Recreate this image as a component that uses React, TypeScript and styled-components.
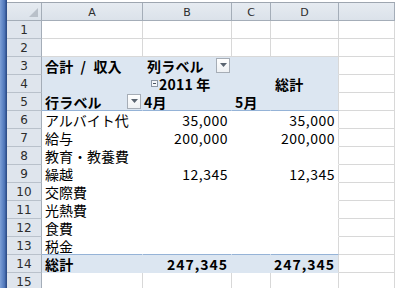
import React from "react";
import styled, { createGlobalStyle, css } from "styled-components";

const Global = createGlobalStyle`
  html, body { margin: 0; padding: 0; background: #ffffff; }
  body { width: 395px; height: 288px; overflow: hidden; }
`;

const Window = styled.div`
  display: flex;
  width: 395px;
  height: 288px;
  overflow: hidden;
  background: #fff;
`;

const FrameStrip = styled.div`
  width: 7px;
  flex: none;
  background: linear-gradient(to right, #7d9fd6 0px, #5d84c4 3px, #4a70b3 5px, #2f4f8a 6px);
`;

const SheetArea = styled.div`
  flex: 1;
  display: flex;
  flex-direction: column;
`;

const TopEdge = styled.div`
  height: 3px;
  flex: none;
  background: #ffffff;
  border-bottom: 1px solid #9ea6b0;
  box-sizing: border-box;
`;

const Grid = styled.div`
  display: grid;
  grid-template-columns: 35px 101px 89px 39px 68px 1fr;
  grid-auto-rows: 18px;
  font-family: "Noto Sans CJK JP", "Noto Sans", sans-serif;
  font-size: 14px;
  color: #000;
`;

const ColHeader = styled.div`
  box-sizing: border-box;
  background: linear-gradient(#e6ebf1, #dbe2ea);
  border-right: 1px solid #a4adb8;
  border-bottom: 1px solid #a4adb8;
  display: flex;
  align-items: center;
  justify-content: center;
  font-family: "DejaVu Sans", sans-serif;
  font-size: 11px;
  color: #2c2c2c;
  padding-top: 1px;
`;

const Corner = styled(ColHeader)`
  justify-content: flex-end;
  align-items: flex-end;
  padding: 0 3px 3px 0;
`;

const RowHeader = styled.div`
  box-sizing: border-box;
  background: #dfe5ed;
  border-right: 1px solid #a4adb8;
  border-bottom: 1px solid #b9c1cb;
  display: flex;
  align-items: center;
  justify-content: center;
  font-family: "DejaVu Sans", sans-serif;
  font-size: 12px;
  color: #2c2c2c;
  padding-top: 1px;
`;

type Tone = "plain" | "pivot" | "body";
type Line = "grid" | "none" | "blue";

const lineColor = (l: Line, bg: string) =>
  l === "grid" ? "#d8d8d8" : l === "blue" ? "#95b3d7" : bg;

const Cell = styled.div<{
  $tone: Tone;
  $bottom: Line;
  $right: Line;
  $bold?: boolean;
  $align?: "left" | "right";
  $pad?: number;
}>`
  box-sizing: border-box;
  ${({ $tone, $bottom, $right }) => {
    const bg = $tone === "pivot" ? "#dce6f1" : "#ffffff";
    return css`
      background: ${bg};
      border-bottom: 1px solid ${lineColor($bottom, bg)};
      border-right: 1px solid ${lineColor($right, bg)};
    `;
  }}
  display: flex;
  align-items: flex-end;
  justify-content: ${({ $align }) => ($align === "right" ? "flex-end" : "flex-start")};
  padding: ${({ $pad = 3, $align }) =>
    $align === "right" ? `0 3px 0 0` : `0 0 0 ${$pad}px`};
  font-weight: ${({ $bold }) => ($bold ? 700 : 400)};
  line-height: 17px;
  white-space: nowrap;
  overflow: visible;
  letter-spacing: ${({ $bold, $align }) =>
    $align === "right" ? ($bold ? "1px" : "0.5px") : $bold ? "0.2px" : "0"};
`;

const Label = styled.span`
  line-height: 16px;
`;

const DropButton = styled.span`
  box-sizing: border-box;
  width: 14px;
  height: 15px;
  margin-left: auto;
  margin-right: 1px;
  margin-bottom: 1px;
  border: 1px solid #a6adb6;
  background: linear-gradient(#ffffff, #eef1f4);
  display: flex;
  align-items: center;
  justify-content: center;
  align-self: center;
`;

const Collapse = styled.span`
  box-sizing: border-box;
  width: 7px;
  height: 7px;
  border: 1px solid #8c96a3;
  background: #f4f6f8;
  display: inline-flex;
  align-items: center;
  justify-content: center;
  margin: 0 1px 5px 5px;
  &::after {
    content: "";
    width: 3px;
    height: 1px;
    background: #4a5563;
  }
`;

const Arrow = () => (
  <svg width="7" height="4" viewBox="0 0 7 4">
    <path d="M0 0 H7 L3.5 4 Z" fill="#5a6470" />
  </svg>
);

const CornerMark = () => (
  <svg width="9" height="9" viewBox="0 0 9 9">
    <path d="M9 0 V9 H0 Z" fill="#b9c0c9" />
  </svg>
);

type CellSpec = {
  text?: React.ReactNode;
  bold?: boolean;
  align?: "left" | "right";
  pad?: number;
  drop?: boolean;
  collapse?: boolean;
};

type RowSpec = {
  n: number;
  tone: "plain" | "pivotHead" | "body" | "total";
  bottomBlue?: boolean;
  cells: (CellSpec | undefined)[];
};

const rows: RowSpec[] = [
  { n: 1, tone: "plain", cells: [] },
  { n: 2, tone: "plain", cells: [] },
  {
    n: 3,
    tone: "pivotHead",
    cells: [
      { text: "合計\u2002/\u2002収入", bold: true },
      { text: "列ラベル", bold: true, pad: 4, drop: true },
    ],
  },
  {
    n: 4,
    tone: "pivotHead",
    cells: [
      undefined,
      { text: "2011 年", bold: true, pad: 3, collapse: true },
      undefined,
      { text: "総計", bold: true, pad: 4 },
    ],
  },
  {
    n: 5,
    tone: "pivotHead",
    bottomBlue: true,
    cells: [
      { text: "行ラベル", bold: true, drop: true },
      { text: "4月", bold: true, pad: 1 },
      { text: "5月", bold: true, pad: 3 },
    ],
  },
  { n: 6, tone: "body", cells: [{ text: "アルバイト代" }, { text: "35,000", align: "right" }, undefined, { text: "35,000", align: "right" }] },
  { n: 7, tone: "body", cells: [{ text: "給与" }, { text: "200,000", align: "right" }, undefined, { text: "200,000", align: "right" }] },
  { n: 8, tone: "body", cells: [{ text: "教育・教養費" }] },
  { n: 9, tone: "body", cells: [{ text: "繰越" }, { text: "12,345", align: "right" }, undefined, { text: "12,345", align: "right" }] },
  { n: 10, tone: "body", cells: [{ text: "交際費" }] },
  { n: 11, tone: "body", cells: [{ text: "光熱費" }] },
  { n: 12, tone: "body", cells: [{ text: "食費" }] },
  { n: 13, tone: "body", bottomBlue: true, cells: [{ text: "税金" }] },
  {
    n: 14,
    tone: "total",
    cells: [
      { text: "総計", bold: true },
      { text: "247,345", bold: true, align: "right" },
      undefined,
      { text: "247,345", bold: true, align: "right" },
    ],
  },
  { n: 15, tone: "plain", cells: [] },
];

const columns = ["A", "B", "C", "D", ""];

export default function App() {
  return (
    <Window>
      <Global />
      <FrameStrip />
      <SheetArea>
        <TopEdge />
        <Grid>
          <Corner>
            <CornerMark />
          </Corner>
          {columns.map((c, i) => (
            <ColHeader key={i}>{c}</ColHeader>
          ))}
          {rows.map((r) => (
            <React.Fragment key={r.n}>
              <RowHeader>{r.n}</RowHeader>
              {columns.map((_, ci) => {
                const inPivot = r.tone !== "plain" && ci < 4;
                const tone: Tone =
                  !inPivot ? "plain" : r.tone === "body" ? "body" : "pivot";
                const bottom: Line = !inPivot
                  ? "grid"
                  : r.bottomBlue
                  ? "blue"
                  : "none";
                const right: Line = !inPivot ? "grid" : ci === 3 ? "grid" : "none";
                const spec = r.cells[ci];
                return (
                  <Cell
                    key={ci}
                    $tone={tone}
                    $bottom={bottom}
                    $right={right}
                    $bold={spec?.bold}
                    $align={spec?.align}
                    $pad={spec?.pad}
                  >
                    {spec?.collapse && <Collapse />}
                    {spec?.text && <Label>{spec.text}</Label>}
                    {spec?.drop && (
                      <DropButton>
                        <Arrow />
                      </DropButton>
                    )}
                  </Cell>
                );
              })}
            </React.Fragment>
          ))}
        </Grid>
      </SheetArea>
    </Window>
  );
}
